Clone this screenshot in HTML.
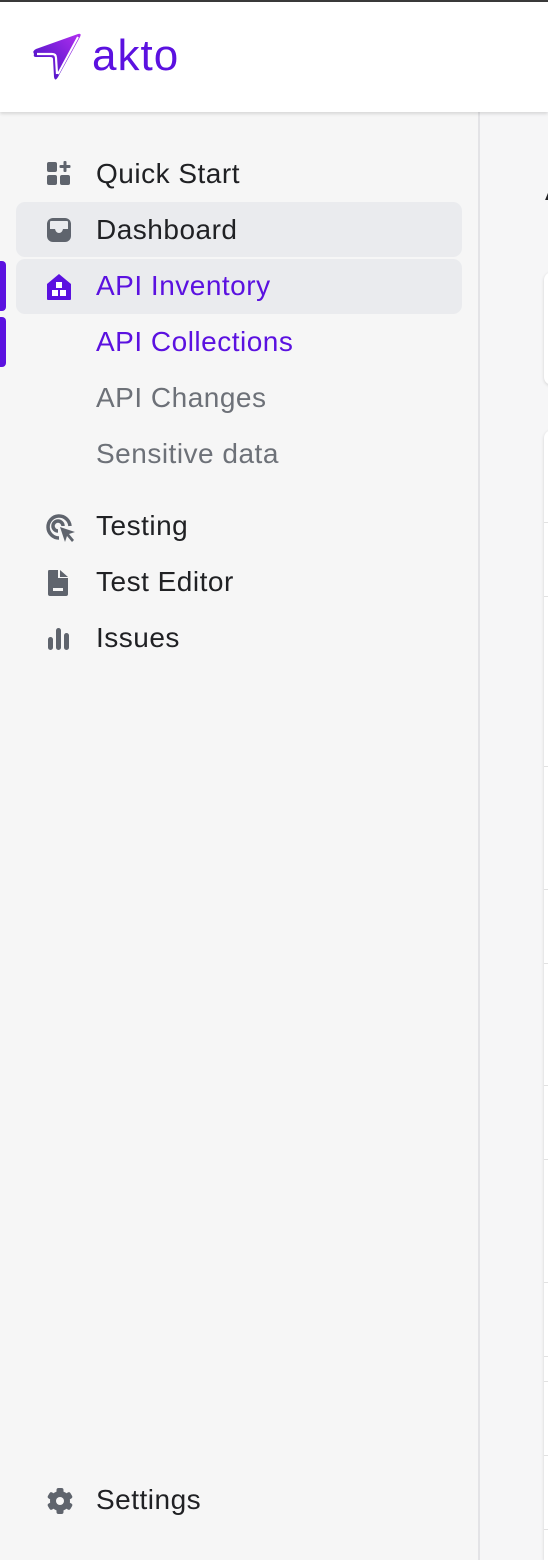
<!DOCTYPE html>
<html><head><meta charset="utf-8"><style>
*{margin:0;padding:0;box-sizing:border-box}
html,body{width:548px;height:1560px;overflow:hidden;background:#f6f6f7;font-family:"Liberation Sans",sans-serif}
.top{position:absolute;left:0;top:0;width:548px;height:2px;background:#3a3a3a}
.hdr{position:absolute;left:0;top:2px;width:548px;height:110px;background:#fff;box-shadow:0 2px 3px rgba(0,0,0,.12);z-index:2}
.logo{position:absolute;left:92px;top:29px;font-size:44px;color:#5b11e0;letter-spacing:1px}
.side{position:absolute;left:0;top:112px;width:480px;height:1448px;background:#f6f6f6;border-right:2px solid #e3e3e6}
.item{position:absolute;left:0;width:480px;height:56px;font-size:28px;letter-spacing:0.5px;color:#202124;line-height:56px}
.item span{position:absolute;left:96px;top:0}
.item svg{position:absolute;left:46px;top:15px}
.hl{position:absolute;left:16px;width:446px;height:55px;background:#eaebee;border-radius:9px}
.bar{position:absolute;left:0;width:6px;height:50px;background:#5b11e0;border-radius:0 4px 4px 0}
.sub{color:#6d7178}
.pur{color:#5b11e0}
.right{position:absolute;left:544px;background:#fff;width:10px}
.line{position:absolute;left:544px;width:4px;height:1px;background:#e2e2e2}
</style></head><body>
<div class="top"></div>
<div class="hdr">
<svg style="position:absolute;left:30px;top:29px" width="54" height="52" viewBox="0 0 54 52">
<defs><linearGradient id="g" x1="0" y1="1" x2="1" y2="0"><stop offset="0" stop-color="#3b0fc0"/><stop offset="1" stop-color="#b12ff0"/></linearGradient></defs>
<path d="M4 23 Q2 20 6 18 L48 3 Q52 2 50 6 L28 46 Q25 51 24 46 L23 28 Q23 26 20 26 L6 26 Q3 26 4 23 Z" fill="url(#g)"/>
<path d="M7 23 L22 23 Q26 23 26 27 L27 43" fill="none" stroke="#fff" stroke-width="2.2"/>
<path d="M28 43 L48 6" stroke="#fff" stroke-width="2" fill="none"/>
</svg>
<div class="logo">akto</div>
</div>
<div class="side"></div>
<div class="hl" style="top:202px"></div>
<div class="hl" style="top:259px"></div>
<div class="bar" style="top:261px"></div>
<div class="bar" style="top:317px"></div>

<div class="item" style="top:146px"><svg width="26" height="26" viewBox="0 0 26 26" fill="#5f646d"><rect x="1" y="1" width="10" height="10" rx="2"/><rect x="1" y="14" width="10" height="10" rx="2"/><rect x="14" y="14" width="10" height="10" rx="2"/><rect x="17.5" y="0" width="3" height="11" rx="1"/><rect x="13.5" y="4" width="11" height="3" rx="1"/></svg><span>Quick Start</span></div>
<div class="item" style="top:202px"><svg width="26" height="26" viewBox="0 0 26 26"><rect x="1" y="1" width="24" height="24" rx="6" fill="#5f646d"/><path d="M4 5 Q4 4 5 4 H21 Q22 4 22 5 V12 H17 Q16 16 13 16 Q10 16 9 12 H4 Z" fill="#eaebee"/></svg><span>Dashboard</span></div>
<div class="item" style="top:258px"><svg width="26" height="28" viewBox="0 0 26 28"><path d="M1 11 L13 1 L25 11 V26 Q25 27 24 27 H2 Q1 27 1 26 Z" fill="#5b11e0"/><rect x="10" y="9" width="6" height="6" fill="#fff"/><rect x="6" y="17" width="6" height="6" fill="#fff"/><rect x="14" y="17" width="6" height="6" fill="#fff"/></svg><span class="pur">API Inventory</span></div>
<div class="item" style="top:314px"><span class="pur">API Collections</span></div>
<div class="item" style="top:370px"><span class="sub">API Changes</span></div>
<div class="item" style="top:426px"><span class="sub">Sensitive data</span></div>
<div class="item" style="top:498px"><svg width="32" height="30" viewBox="0 0 32 30"><path d="M13 25 A11 11 0 1 1 24 13" fill="none" stroke="#5f646d" stroke-width="3.5"/><path d="M12 18 A5 5 0 1 1 17 13" fill="none" stroke="#5f646d" stroke-width="3.5"/><path d="M14 14 L29 19 L23 21 L28 27 L26 29 L21 23 L19 29 Z" fill="#5f646d"/></svg><span>Testing</span></div>
<div class="item" style="top:554px"><svg width="24" height="28" viewBox="0 0 24 28"><path d="M3 1 H12 V9 H22 V25 Q22 27 20 27 H4 Q2 27 2 25 V3 Q2 1 3 1 Z" fill="#5f646d"/><path d="M14 1 L22 8 H14 Z" fill="#5f646d"/><rect x="7" y="19" width="10" height="3" fill="#f6f6f6"/></svg><span>Test Editor</span></div>
<div class="item" style="top:610px"><svg width="26" height="26" viewBox="0 0 26 26" fill="#5f646d"><rect x="2" y="12" width="5" height="13" rx="2.5"/><rect x="10" y="3" width="5" height="22" rx="2.5"/><rect x="18" y="8" width="5" height="17" rx="2.5"/></svg><span>Issues</span></div>
<div class="item" style="top:1472px"><svg width="28" height="28" viewBox="0 0 28 28"><g fill="#5f646d" transform="translate(14 14)"><circle r="10"/><rect x="-3.5" y="-13" width="7" height="26" rx="2"/><rect x="-3.5" y="-13" width="7" height="26" rx="2" transform="rotate(60)"/><rect x="-3.5" y="-13" width="7" height="26" rx="2" transform="rotate(120)"/></g><circle cx="14" cy="14" r="4" fill="#f6f6f6"/></svg><span>Settings</span></div>

<div style="position:absolute;left:543px;top:186px;width:5px;height:14px;font-size:24px;color:#202124;overflow:hidden;line-height:24px">A</div>
<div class="right" style="top:272px;height:113px;border-radius:8px 0 0 8px;box-shadow:0 1px 3px rgba(0,0,0,.15)"></div>
<div class="right" style="top:430px;height:1130px;border-radius:8px 0 0 0;box-shadow:0 1px 3px rgba(0,0,0,.15)"></div>
<div class="line" style="top:522px"></div><div class="line" style="top:596px"></div><div class="line" style="top:766px"></div><div class="line" style="top:889px"></div><div class="line" style="top:963px"></div><div class="line" style="top:1085px"></div><div class="line" style="top:1159px"></div><div class="line" style="top:1282px"></div><div class="line" style="top:1356px"></div><div class="line" style="top:1381px"></div><div class="line" style="top:1455px"></div><div class="line" style="top:1529px"></div>
</body></html>
